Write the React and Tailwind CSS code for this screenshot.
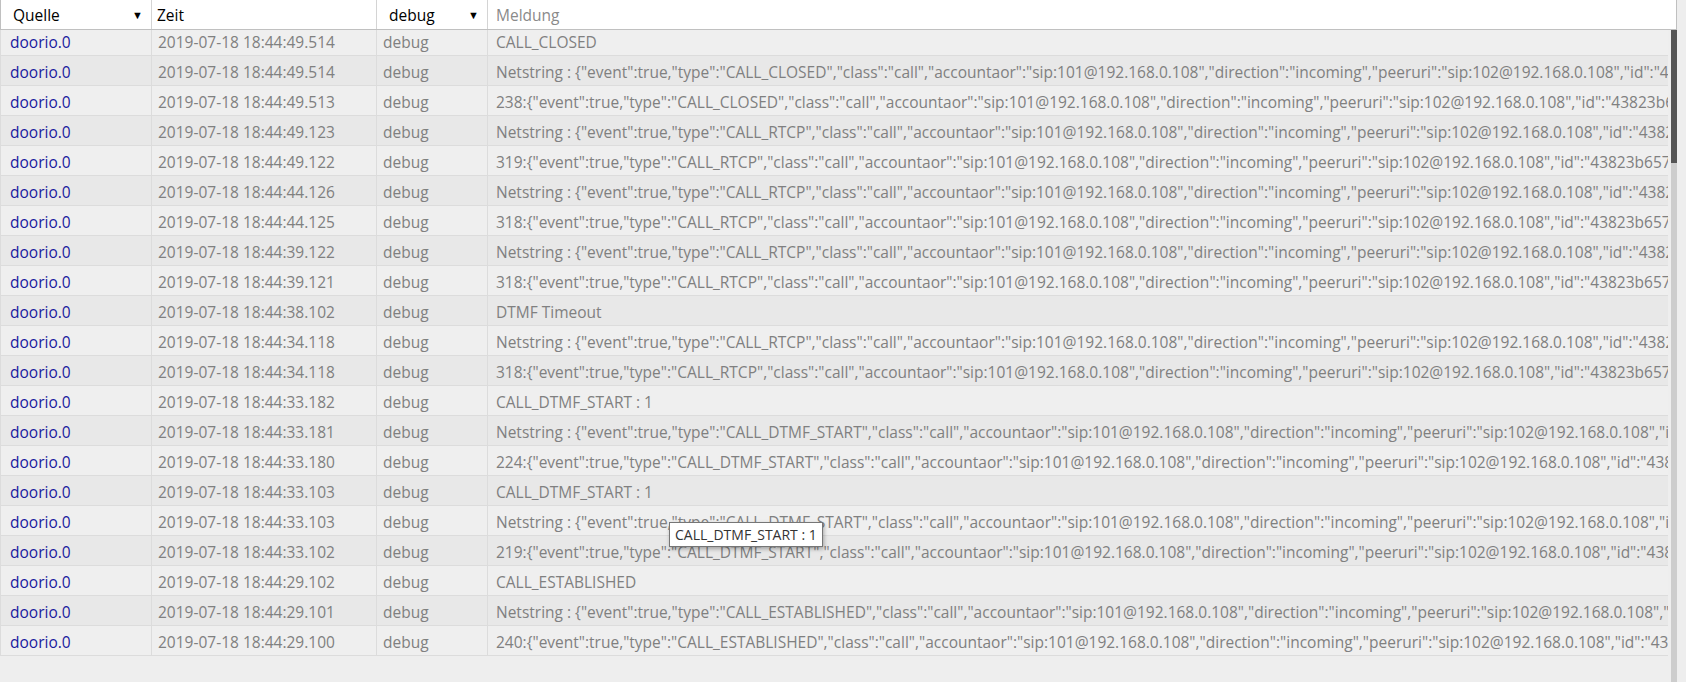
import React from 'react';

const rows = [
  ['2019-07-18 18:44:49.514', 'CALL_CLOSED'],
  ['2019-07-18 18:44:49.514', 'Netstring : {"event":true,"type":"CALL_CLOSED","class":"call","accountaor":"sip:101@192.168.0.108","direction":"incoming","peeruri":"sip:102@192.168.0.108","id":"43823b6574a1c2e9","reason":""}'],
  ['2019-07-18 18:44:49.513', '238:{"event":true,"type":"CALL_CLOSED","class":"call","accountaor":"sip:101@192.168.0.108","direction":"incoming","peeruri":"sip:102@192.168.0.108","id":"43823b6574a1c2e9","reason":""}'],
  ['2019-07-18 18:44:49.123', 'Netstring : {"event":true,"type":"CALL_RTCP","class":"call","accountaor":"sip:101@192.168.0.108","direction":"incoming","peeruri":"sip:102@192.168.0.108","id":"43823b6574a1c2e9"}'],
  ['2019-07-18 18:44:49.122', '319:{"event":true,"type":"CALL_RTCP","class":"call","accountaor":"sip:101@192.168.0.108","direction":"incoming","peeruri":"sip:102@192.168.0.108","id":"43823b6574a1c2e9"}'],
  ['2019-07-18 18:44:44.126', 'Netstring : {"event":true,"type":"CALL_RTCP","class":"call","accountaor":"sip:101@192.168.0.108","direction":"incoming","peeruri":"sip:102@192.168.0.108","id":"43823b6574a1c2e9"}'],
  ['2019-07-18 18:44:44.125', '318:{"event":true,"type":"CALL_RTCP","class":"call","accountaor":"sip:101@192.168.0.108","direction":"incoming","peeruri":"sip:102@192.168.0.108","id":"43823b6574a1c2e9"}'],
  ['2019-07-18 18:44:39.122', 'Netstring : {"event":true,"type":"CALL_RTCP","class":"call","accountaor":"sip:101@192.168.0.108","direction":"incoming","peeruri":"sip:102@192.168.0.108","id":"43823b6574a1c2e9"}'],
  ['2019-07-18 18:44:39.121', '318:{"event":true,"type":"CALL_RTCP","class":"call","accountaor":"sip:101@192.168.0.108","direction":"incoming","peeruri":"sip:102@192.168.0.108","id":"43823b6574a1c2e9"}'],
  ['2019-07-18 18:44:38.102', 'DTMF Timeout'],
  ['2019-07-18 18:44:34.118', 'Netstring : {"event":true,"type":"CALL_RTCP","class":"call","accountaor":"sip:101@192.168.0.108","direction":"incoming","peeruri":"sip:102@192.168.0.108","id":"43823b6574a1c2e9"}'],
  ['2019-07-18 18:44:34.118', '318:{"event":true,"type":"CALL_RTCP","class":"call","accountaor":"sip:101@192.168.0.108","direction":"incoming","peeruri":"sip:102@192.168.0.108","id":"43823b6574a1c2e9"}'],
  ['2019-07-18 18:44:33.182', 'CALL_DTMF_START : 1'],
  ['2019-07-18 18:44:33.181', 'Netstring : {"event":true,"type":"CALL_DTMF_START","class":"call","accountaor":"sip:101@192.168.0.108","direction":"incoming","peeruri":"sip:102@192.168.0.108","id":"43823b6574a1c2e9"}'],
  ['2019-07-18 18:44:33.180', '224:{"event":true,"type":"CALL_DTMF_START","class":"call","accountaor":"sip:101@192.168.0.108","direction":"incoming","peeruri":"sip:102@192.168.0.108","id":"43823b6574a1c2e9"}'],
  ['2019-07-18 18:44:33.103', 'CALL_DTMF_START : 1'],
  ['2019-07-18 18:44:33.103', 'Netstring : {"event":true,"type":"CALL_DTMF_START","class":"call","accountaor":"sip:101@192.168.0.108","direction":"incoming","peeruri":"sip:102@192.168.0.108","id":"43823b6574a1c2e9"}'],
  ['2019-07-18 18:44:33.102', '219:{"event":true,"type":"CALL_DTMF_START","class":"call","accountaor":"sip:101@192.168.0.108","direction":"incoming","peeruri":"sip:102@192.168.0.108","id":"43823b6574a1c2e9"}'],
  ['2019-07-18 18:44:29.102', 'CALL_ESTABLISHED'],
  ['2019-07-18 18:44:29.101', 'Netstring : {"event":true,"type":"CALL_ESTABLISHED","class":"call","accountaor":"sip:101@192.168.0.108","direction":"incoming","peeruri":"sip:102@192.168.0.108","id":"43823b6574a1c2e9"}'],
  ['2019-07-18 18:44:29.100', '240:{"event":true,"type":"CALL_ESTABLISHED","class":"call","accountaor":"sip:101@192.168.0.108","direction":"incoming","peeruri":"sip:102@192.168.0.108","id":"43823b6574a1c2e9"}'],
];

const App = () => {
  return (
    <div className="relative w-[1686px] h-[694px] bg-white font-['Open_Sans',sans-serif] text-[15.5px]">
      <div className="h-[682px] bg-[#eeeeee] flex flex-col">
        {/* Header filters */}
        <div className="relative z-10 flex h-[30px] w-[1677px] shrink-0 bg-white border-l border-r border-b border-[#c0c0c0]">
          <div className="w-[151px] flex items-center justify-between pl-3 pr-2 pt-[2px] border-r border-[#d4d4d4] text-black">
            <span>Quelle</span>
            <span className="text-[11px]">▼</span>
          </div>
          <div className="w-[225px] flex items-center px-[5px] pt-[2px] border-r border-[#d4d4d4] text-black">Zeit</div>
          <div className="w-[111px] flex items-center justify-between pl-3 pr-2 pt-[2px] border-r border-[#d4d4d4] text-black">
            <span>debug</span>
            <span className="text-[11px]">▼</span>
          </div>
          <div className="flex-1 flex items-center px-2 pt-[2px] text-[#8a8a8a]">Meldung</div>
        </div>

        {/* Log rows */}
        <div className="flex flex-1 overflow-hidden">
          <div className="w-[1668px] overflow-hidden">
            <div className="-mt-[4px]">
              {rows.map(([time, msg], i) => (
                <div
                  key={i}
                  className={`flex h-[30px] border-l border-b border-[#dcdcdc] ${i % 2 === 0 ? 'bg-[#efefef]' : 'bg-[#e8e8e8]'}`}
                >
                  <div className="w-[151px] shrink-0 flex items-center pl-[9px] pt-[5px] border-r border-[#dcdcdc] text-[#1a1a9e]">doorio.0</div>
                  <div className="w-[225px] shrink-0 flex items-center pl-[6px] pt-[5px] border-r border-[#dcdcdc] text-[#808080]">{time}</div>
                  <div className="w-[111px] shrink-0 flex items-center pl-[6px] pt-[5px] border-r border-[#dcdcdc] text-[#808080]">debug</div>
                  <div className="flex-1 min-w-0 flex items-center pl-2 pt-[5px] text-[#808080] whitespace-nowrap overflow-hidden">{msg}</div>
                </div>
              ))}
            </div>
          </div>
          {/* Scrollbar */}
          <div className="w-[9px] flex justify-end">
            <div className="w-[6px] flex flex-col">
              <div className="h-[133px] bg-[#555555]"></div>
              <div className="flex-1 bg-[#cdcdcd]"></div>
            </div>
          </div>
        </div>
      </div>

      {/* Tooltip */}
      <div className="absolute left-[669px] top-[522px] h-[25px] px-[5px] flex items-center bg-white border border-[#767676] shadow-[1px_2px_4px_rgba(0,0,0,0.3)] text-[14px] text-[#333333]">
        CALL_DTMF_START : 1
      </div>
    </div>
  );
};

export default App;
